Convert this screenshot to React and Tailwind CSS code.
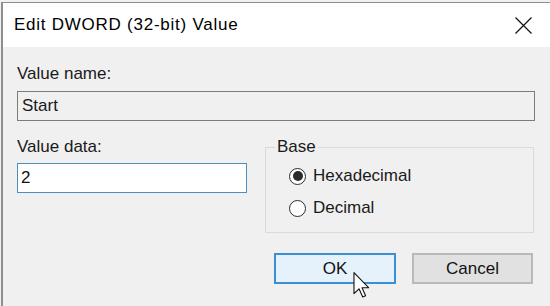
import React, { useState } from 'react';

const Radio = ({ checked, label, onSelect }) => (
  <div onClick={onSelect} className="flex items-center h-[20px] cursor-default select-none">
    <span className="w-[17px] h-[17px] rounded-full border-[1.5px] border-[#2b2b2b] bg-white flex items-center justify-center">
      {checked && <span className="w-[10px] h-[10px] rounded-full bg-[#2b2b2b]" />}
    </span>
    <span className="ml-[7px]">{label}</span>
  </div>
);

const CloseIcon = () => (
  <svg width="17" height="17" viewBox="0 0 17 17">
    <path d="M0.5 0.5 L16.5 16.5 M16.5 0.5 L0.5 16.5" stroke="#111" strokeWidth="1.2" fill="none" />
  </svg>
);

// windows arrow pointer sitting over the OK button
const Pointer = () => (
  <svg width="17" height="26" viewBox="0 0 12 19" className="absolute left-[353px] top-[272px]">
    <path
      d="M0.5 0.5 V15.8 L4.2 12.3 L6.9 18.3 L9 17.4 L6.4 11.5 H11.2 Z"
      fill="#fff"
      stroke="#111"
      strokeWidth="0.8"
      strokeLinejoin="round"
    />
  </svg>
);

export default function App() {
  const [base, setBase] = useState('hex');
  const [value, setValue] = useState('2');

  return (
    <div className="relative w-[550px] h-[306px] overflow-hidden bg-[#eef2f2] pt-[2px] pl-[1px] font-['Liberation_Sans',Arial,sans-serif]">
      <div className="h-full border-t border-l-2 border-[#8e8e8e] bg-[#f0f0f0] flex flex-col">
        <div className="h-[44px] shrink-0 bg-white flex items-center justify-between pl-[11px] pr-[18px]">
          <span className="text-[17px] tracking-[0.75px] text-black">Edit DWORD (32-bit) Value</span>
          <CloseIcon />
        </div>

        <div className="pl-[14px] pr-[15px] pt-[17px] text-[17px] leading-[20px] text-[#1a1a1a]">
          <div>Value name:</div>
          <div className="mt-[7px] h-[30px] border border-[#7c7c7c] bg-[#f0f0f0] flex items-center pl-[4px]">
            Start
          </div>

          <div className="flex mt-[16px]">
            <div className="w-[230px] shrink-0">
              <div>Value data:</div>
              <input
                value={value}
                onChange={(e) => setValue(e.target.value)}
                className="mt-[6px] w-[230px] h-[30px] border border-[#4a8fbd] bg-white pl-[3px] outline-none text-[#111]"
              />
            </div>

            <fieldset className="ml-[18px] w-[269px] border border-[#dadada] pb-[14px]">
              <legend className="ml-[9px] px-[2px]">Base</legend>
              <div className="pl-[23px] pt-[9px] flex flex-col gap-[12px]">
                <Radio checked={base === 'hex'} label="Hexadecimal" onSelect={() => setBase('hex')} />
                <Radio checked={base === 'dec'} label="Decimal" onSelect={() => setBase('dec')} />
              </div>
            </fieldset>
          </div>

          <div className="flex justify-end gap-[16px] mt-[20px] mr-[2px]">
            <button className="w-[122px] h-[31px] border-2 border-[#3d8fd4] bg-[#e5f1fb] text-[#111]">
              OK
            </button>
            <button className="w-[121px] h-[31px] border-2 border-[#b9b9b9] bg-[#e1e1e1] text-[#111]">
              Cancel
            </button>
          </div>
        </div>
      </div>
      <Pointer />
    </div>
  );
}
